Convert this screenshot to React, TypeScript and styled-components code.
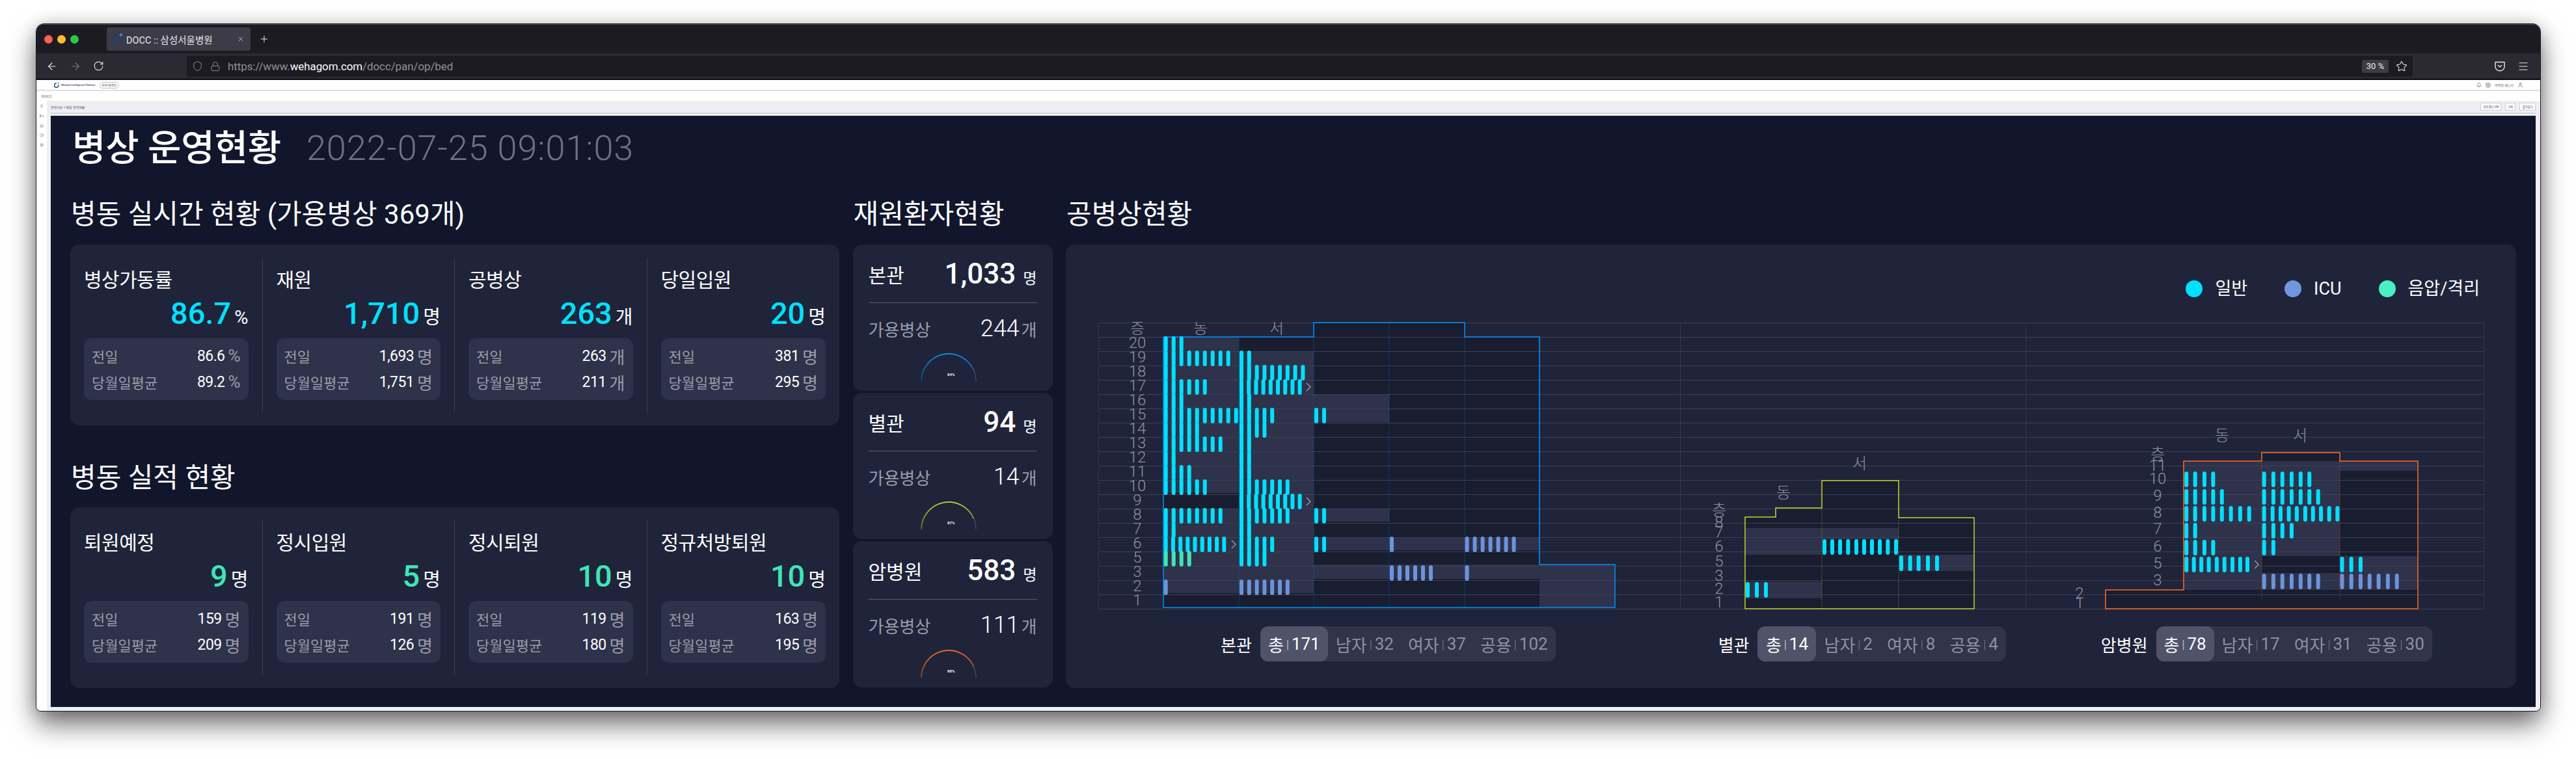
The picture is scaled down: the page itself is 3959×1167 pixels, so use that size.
import React from 'react';
import styled, { createGlobalStyle } from 'styled-components';
import { ArrowLeft, ArrowRight, RotateCw, Shield, Lock, Star, Menu, Plus, X, Bell, Grid2x2, Home, Bed, Settings, Clock, User } from 'lucide-react';

const FONT = `Roboto, "Noto Sans CJK KR", "Noto Sans", sans-serif`;

const Global = createGlobalStyle`
  html, body { margin: 0; padding: 0; background: #fff; overflow: hidden; }
  body { font-family: ${FONT}; }
  * { box-sizing: border-box; }
`;

const Page = styled.div`
  width: 3959px; height: 1167px; padding: 37px 0 0 56px; background: #fff; overflow: hidden;
`;
const Browser = styled.div`
  width: 3848px; height: 1056px; display: flex; flex-direction: column; overflow: hidden;
  border-radius: 12px 12px 7px 7px; background: #fff;
  box-shadow: 0 0 0 1px #1a1a1e, 0 20px 42px rgba(0,0,0,.58), 0 0 26px rgba(0,0,0,.16);
`;
const TabBar = styled.div`
  height: 45px; flex: none; background: #1c1b22; display: flex; align-items: center; padding-left: 12px;
  border-top: 1px solid #55545c;
`;
const Light = styled.span<{ $c: string }>`
  width: 13px; height: 13px; border-radius: 50%; background: ${p => p.$c}; margin-right: 7px;
`;
const Tab = styled.div`
  width: 221px; height: 36px; margin-left: 36px; background: #3d3b47; border-radius: 4px; color: #e8e8ec;
  display: flex; align-items: center; padding: 0 9px 0 9px; font-size: 14.5px; gap: 4px; white-space: nowrap;
`;
const TabTitle = styled.span` flex: 1; `;
const NewTab = styled.span` margin-left: 13px; color: #e8e8ec; display: flex; `;
const Toolbar = styled.div`
  height: 41px; flex: none; background: #2b2a33; border-bottom: 2px solid #0a0a0c; display: flex; align-items: center;
  padding: 0 17px 0 15px; color: #e8e8ec;
`;
const NavIcons = styled.div` width: 216px; display: flex; gap: 18px; align-items: center; flex: none; `;
const UrlBar = styled.div`
  width: 3421px; height: 32px; background: #1c1b22; border-radius: 4px; display: flex; align-items: center;
  padding: 0 8px; gap: 11px; font-size: 17px; color: #8f8f9a; flex: none;
`;
const UrlStrong = styled.b` color: #fbfbfe; font-weight: 400; `;
const UrlText = styled.span` flex: 1; letter-spacing: -.1px; `;
const Zoom = styled.span`
  width: 41px; height: 20px; background: #3d3b47; border-radius: 3px; color: #eee; font-size: 13px;
  display: flex; align-items: center; justify-content: center;
`;
const ToolEnd = styled.div` margin-left: auto; display: flex; gap: 18px; align-items: center; `;

const AppHeader = styled.div`
  height: 17px; flex: none; background: #fff; border-bottom: 2px solid #dfdfe3; display: flex; align-items: center;
  padding: 0 26px 0 27px; font-size: 5px; color: #555;
`;
const LogoText = styled.span` margin-left: 2px; color: #2b3a6b; font-weight: 500; font-size: 4px; `;
const HospitalTag = styled.span`
  margin-left: 6px; border: 1px solid #bbb; border-radius: 5px; padding: 1px 3px; font-size: 4px; color: #334;
`;
const HeaderEnd = styled.div` margin-left: auto; display: flex; align-items: center; gap: 6px; color: #666; `;
const AppTitle = styled.div`
  height: 15px; flex: none; background: #fff; font-size: 6px; color: #555; padding-left: 8px; display: flex; align-items: center;
`;
const AppBody = styled.div` flex: 1; display: flex; min-height: 0; `;
const Sidebar = styled.div`
  width: 16px; flex: none; background: #fff; display: flex; flex-direction: column; align-items: center; gap: 9px;
  padding: 5px 0 0 0; color: #777;
`;
const Content = styled.div`
  flex: 1; background: #eeeff5; padding: 0 7px 6px 6px; display: flex; flex-direction: column; min-width: 0;
`;
const Crumb = styled.div`
  height: 20px; flex: none; border-bottom: 2px solid #d4d6df; display: flex; align-items: center; font-size: 5px; color: #444;
  padding-left: 0; margin-bottom: 3px;
`;
const CrumbButtons = styled.div` margin-left: auto; display: flex; gap: 6px; `;
const CrumbButton = styled.span`
  background: #fff; border: 1px solid #ccd; font-size: 4.5px; padding: 2px 3px; color: #445;
`;
const Panel = styled.div`
  flex: 1; background: #11162c; padding: 0 30px; color: #fff; min-height: 0;
`;
const Head = styled.div` height: 86px; display: flex; align-items: center; gap: 39px; padding: 13px 0 0 3px; `;
const Title = styled.h1` margin: 0; font-size: 56px; font-weight: 500; line-height: 60px; letter-spacing: -.3px; white-space: nowrap; `;
const DateText = styled.span` font-size: 54px; font-weight: 300; color: #6e7185; line-height: 60px; letter-spacing: .9px; `;
const Columns = styled.div` display: grid; grid-template-columns: 1182px 307px 2229px; column-gap: 20.5px; `;
const SectionTitle = styled.h2<{ $top: number; $h: number }>`
  margin: 0; height: ${p => p.$h}px; padding: ${p => p.$top}px 0 0 1px; font-size: 42px; line-height: 42px; font-weight: 400; white-space: nowrap;
`;
const Card = styled.div`
  background: #1f243a; border-radius: 14px;
`;
const StatCard = styled(Card)`
  height: 278px; padding: 21px 0 20px; display: grid; grid-template-columns: repeat(4, 1fr);
`;
const StatCol = styled.div`
  padding: 0 21px; border-right: 1px solid #3a3e54;
  &:last-child { border-right: 0; }
`;
const StatLabel = styled.div` height: 68px; line-height: 68px; font-size: 30px; white-space: nowrap; letter-spacing: -.5px; `;
const StatValueRow = styled.div` height: 34px; display: flex; justify-content: flex-end; align-items: baseline; gap: 5px; line-height: 34px; `;
const StatValue = styled.span<{ $c: string }>` font-size: 47px; color: ${p => p.$c}; font-weight: 500; `;
const StatUnit = styled.span` font-size: 29px; color: #fff; `;
const SubBox = styled.div`
  margin-top: 21px; height: 95px; padding: 7px 12px; border-radius: 12px; background: #2e324a;
`;
const SubRow = styled.div`
  height: 40px; display: flex; align-items: center; justify-content: space-between; font-size: 22px; color: #9a9cab;
`;
const SubRight = styled.span` display: flex; align-items: center; gap: 5px; `;
const SubNum = styled.span` color: #fff; font-size: 23px; letter-spacing: -.6px; `;
const SubUnit = styled.span` font-size: 26px; color: #9a9cab; `;

const WardStack = styled.div` display: grid; grid-auto-rows: 225px; row-gap: 3px; `;
const WardCard = styled(Card)` padding: 0 24px; `;
const WardTop = styled.div`
  height: 90px; border-bottom: 1px solid #5b5e72; display: flex; align-items: center; justify-content: space-between;
`;
const WardName = styled.span` font-size: 30px; `;
const WardNum = styled.span` font-size: 44px; font-weight: 500; `;
const WardUnit = styled.span` font-size: 23px; margin-left: 11px; `;
const WardMid = styled.div`
  height: 78px; display: flex; align-items: center; justify-content: space-between; color: #9a9cab; font-size: 26px;
`;
const WardBeds = styled.span` color: #fff; font-size: 36px; font-weight: 300; `;
const WardBedUnit = styled.span` color: #9a9cab; font-size: 26px; margin-left: 3px; `;
const GaugeWrap = styled.div` display: flex; justify-content: center; padding-right: 12px; margin-top: -2px; `;
const GaugeNote = styled.text` font-size: 6px; font-weight: 700; fill: #fff; `;

const VacancyCard = styled(Card)` height: 682px; display: flex; flex-direction: column; `;
const Legend = styled.div`
  margin-top: 55px; height: 26px; display: flex; justify-content: flex-end; padding-right: 56px; gap: 57px; flex: none;
`;
const LegendItem = styled.div` display: flex; align-items: center; gap: 19px; font-size: 27px; line-height: 26px; `;
const LegendDot = styled.span<{ $c: string }>` width: 26px; height: 26px; border-radius: 50%; background: ${p => p.$c}; `;
const ChartSvg = styled.svg`
  display: block; margin: 38px 0 0 49px; flex: none; font-family: ${FONT};
`;
const ChartLabel = styled.text`
  font-size: 24px; font-weight: 300; fill: #8f92a3; text-anchor: middle; dominant-baseline: central;
`;
const Summary = styled.div` margin-top: 25px; display: flex; align-items: center; `;
const SummaryGroup = styled.div<{ $left: number }>`
  margin-left: ${p => p.$left}px; display: flex; align-items: center; gap: 13px; flex: none;
`;
const SummaryName = styled.span` font-size: 26px; color: #fff; `;
const Pill = styled.div`
  height: 54px; border-radius: 12px; background: #31344b; display: flex; align-items: center; gap: 22px;
  color: #8f91a2; font-size: 26px; padding-right: 12px;
`;
const PillItem = styled.span<{ $on?: boolean; $w?: number }>`
  height: 54px; display: flex; align-items: center; justify-content: center; gap: 4px; white-space: nowrap;
  ${p => p.$on ? `background:#50536a;color:#fff;border-radius:12px;margin-right:-10px;` : ''}
  ${p => p.$w ? `width:${p.$w}px;` : ''}
`;
const PillSep = styled.span` font-size: 18px; font-weight: 300; opacity: .8; `;

/* ---------- data ---------- */
const CYAN = '#00e1ff', ICU = '#6c93dc', GREEN = '#3fe6b6';

type Stat = { label: string; value: string; unit: string; prev: string; avg: string };
const live: Stat[] = [
  { label: '병상가동률', value: '86.7', unit: '%', prev: '86.6', avg: '89.2' },
  { label: '재원', value: '1,710', unit: '명', prev: '1,693', avg: '1,751' },
  { label: '공병상', value: '263', unit: '개', prev: '263', avg: '211' },
  { label: '당일입원', value: '20', unit: '명', prev: '381', avg: '295' },
];
const done: Stat[] = [
  { label: '퇴원예정', value: '9', unit: '명', prev: '159', avg: '209' },
  { label: '정시입원', value: '5', unit: '명', prev: '191', avg: '126' },
  { label: '정시퇴원', value: '10', unit: '명', prev: '119', avg: '180' },
  { label: '정규처방퇴원', value: '10', unit: '명', prev: '163', avg: '195' },
];
const wards = [
  { name: '본관', n: '1,033', beds: '244', pct: .87, c: '#0a8fef', dark: '#0b3f73', note: '84%' },
  { name: '별관', n: '94', beds: '14', pct: .87, c: '#c6d42a', dark: '#5f6a20', note: '87%' },
  { name: '암병원', n: '583', beds: '111', pct: .87, c: '#ff6a26', dark: '#86401f', note: '88%' },
];

const seq = (s: number, p: number, n: number) => Array.from({ length: n }, (_, i) => s + p * i);
const floors1 = [20,19,18,17,16,15,14,13,12,11,10,9,8,7,6,5,3,2,1];
const y1 = (f: number) => 518 + 22 * floors1.indexOf(f);

type Bars = { xs: number[]; y: number; h: number; c: string; w?: number };
type Rect = [number, number, number, number];
type Building = {
  color: string; path: string; lit: Rect[]; div: [number, number, number][]; bars: Bars[];
  labels: [string, number, number][]; arrows: [number, number][];
};

const A = 1791.7, B = 1908, C = 2023, D = 2139, E = 2254.6;
const r1 = (f: number, x: number, p: number, n: number, c = CYAN): Bars => ({ xs: seq(x, p, n), y: y1(f) - 1, h: 24, c });
const b1: Building = {
  color: '#0091ff',
  path: 'M1788 934 V518 H2019 V496 H2251 V518 H2366 V868 H2482 V934 Z',
  lit: [
    [1788, 518, 116, 240], [1788, 782, 116, 130], [1904, 540, 115, 372],
    [2019, 606, 116, 43], [2019, 782, 116, 20], [2019, 826, 347, 20], [2019, 868, 347, 22], [2366, 868, 116, 66],
  ],
  div: [[1904, 518, 934], [2019, 518, 934], [2135, 496, 934], [2251, 518, 934], [2366, 518, 868]],
  bars: [
    ...([[20,3],[19,9],[18,2],[17,6],[16,3],[15,10],[14,5],[13,8],[12,2],[11,4],[10,6],[8,8],[7,2]] as [number,number][]).map(([f,n]) => r1(f, A, 12, n)),
    r1(6, A, 11.2, 9), r1(5, A, 12, 4, GREEN), r1(2, A, 12, 1, ICU),
    ...([[19,2],[18,9],[16,2],[15,5],[14,4],[13,2],[12,2],[11,2],[10,7],[8,7],[7,2],[6,5],[5,4]] as [number,number][]).map(([f,n]) => r1(f, B, 11.8, n)),
    r1(17, B, 11.2, 9), r1(9, B, 11.2, 9), r1(2, B, 11.8, 7, ICU),
    r1(15, C, 12, 2), r1(8, C, 12, 2), r1(6, C, 12, 2),
    r1(6, D, 12, 1, ICU), r1(3, D, 12, 6, ICU), r1(6, E, 12, 7, ICU), r1(3, E, 12, 1, ICU),
  ],
  labels: [['층', 1748, 505], ...floors1.map(f => [String(f), 1748, y1(f) + 9] as [string, number, number]), ['동', 1845, 505], ['서', 1962, 505]],
  arrows: [[2011, y1(17) + 11], [2011, y1(9) + 11], [1896, y1(6) + 11]],
};

const b2: Building = {
  color: '#c6d42a',
  path: 'M2682 936 V795 H2729 V781 H2800 V739 H2918 V796 H3034 V936 Z',
  lit: [[2682, 812, 118, 41], [2800, 812, 118, 17], [2918, 853, 116, 25], [2682, 894, 118, 26]],
  div: [[2800, 781, 936], [2918, 796, 936]],
  bars: [
    { xs: [2686, 2700, 2714], y: 895, h: 24, c: CYAN },
    { xs: [732, 768, 804, 841, 879, 915, 951, 987, 1024, 1062].map(v => 2560 + v / 3), y: 829, h: 24, c: CYAN },
    { xs: [1086, 1127, 1166, 1209, 1251].map(v => 2560 + v / 3), y: 854, h: 24, c: CYAN },
  ],
  labels: [
    ['층', 2642, 785], ['8', 2642, 803], ['7', 2642, 818], ['6', 2642, 840], ['5', 2642, 863], ['3', 2642, 885], ['2', 2642, 905], ['1', 2642, 926],
    ['동', 2741, 758], ['서', 2858, 713],
  ],
  arrows: [],
};

const z = (v: number) => 3140 + v / 2.529;
const row3 = (y: number, vals: number[], c = CYAN): Bars => ({ xs: vals.map(z), y, h: 24, c });
const b3: Building = {
  color: '#ff6a26',
  path: 'M3236 936 V907 H3356 V709 H3476 V696 H3596 V709 H3716 V936 Z',
  lit: [[3356, 709, 120, 198], [3476, 709, 120, 146], [3476, 881, 120, 26], [3596, 709, 120, 15], [3596, 855, 120, 52]],
  div: [[3476, 709, 921], [3596, 709, 921]],
  bars: [
    row3(725, [557, 591, 627, 661]), row3(752, [557, 591, 627, 661, 695]), row3(778, [557, 591, 627, 661, 695, 730, 766, 801]),
    row3(804, [557, 591]), row3(830, [557, 591, 627, 661]), row3(856, [557, 586, 615, 644, 675, 705, 736, 766, 794]),
    row3(725, [859, 895, 930, 966, 1001, 1035]), row3(752, [859, 895, 930, 966, 1001, 1035, 1069]),
    row3(778, [859, 892, 923, 955, 986, 1019, 1049, 1080, 1112, 1144]), row3(804, [859, 895, 930, 966]), row3(830, [859, 895]),
    row3(882, [859, 895, 930, 966, 1001, 1035, 1069], ICU),
    row3(856, [1162, 1198, 1234]), row3(882, [1162, 1198, 1234, 1269, 1304, 1340, 1375], ICU),
  ],
  labels: [
    ['층', 3316, 699], ['11', 3316, 716], ['10', 3316, 736], ['9', 3316, 762], ['8', 3316, 788], ['7', 3316, 813], ['6', 3316, 840], ['5', 3316, 866], ['3', 3316, 892],
    ['2', 3196, 912], ['1', 3196, 927], ['동', 3415, 670], ['서', 3535, 670],
  ],
  arrows: [[z(830), 868]],
};

const gridRows = Array.from({ length: 21 }, (_, i) => 496 + 22 * i);

const StatGrid = ({ items, color }: { items: Stat[]; color: string }) => (
  <StatCard>
    {items.map(s => (
      <StatCol key={s.label}>
        <StatLabel>{s.label}</StatLabel>
        <StatValueRow><StatValue $c={color}>{s.value}</StatValue><StatUnit>{s.unit}</StatUnit></StatValueRow>
        <SubBox>
          <SubRow>전일<SubRight><SubNum>{s.prev}</SubNum><SubUnit>{s.unit}</SubUnit></SubRight></SubRow>
          <SubRow>당월일평균<SubRight><SubNum>{s.avg}</SubNum><SubUnit>{s.unit}</SubUnit></SubRight></SubRow>
        </SubBox>
      </StatCol>
    ))}
  </StatCard>
);

const Gauge = ({ pct, c, dark, note, id }: { pct: number; c: string; dark: string; note: string; id: string }) => {
  const R = 42, cx = 44, cy = 44;
  const a = Math.PI * (1 - pct);
  const ex = cx + R * Math.cos(a), ey = cy - R * Math.sin(a);
  return (
    <svg width="88" height="45" viewBox="0 0 88 45">
      <defs>
        <linearGradient id={id} x1="0" y1="1" x2="0" y2="0">
          <stop offset="0" stopColor={dark} />
          <stop offset="1" stopColor={c} />
        </linearGradient>
      </defs>
      <path d={`M${cx - R} ${cy} A${R} ${R} 0 0 1 ${cx + R} ${cy}`} fill="none" stroke="#44475b" strokeWidth="1.5" />
      <path d={`M${cx - R} ${cy} A${R} ${R} 0 0 1 ${ex} ${ey}`} fill="none" stroke={`url(#${id})`} strokeWidth="1.7" />
      <GaugeNote x="42" y="36">{note}</GaugeNote>
    </svg>
  );
};

const BuildingShape = ({ b }: { b: Building }) => (
  <path d={b.path} fill="#181d2f" />
);
const BuildingLit = ({ b }: { b: Building }) => (
  <>{b.lit.map((r, i) => <rect key={i} x={r[0]} y={r[1]} width={r[2]} height={r[3]} fill="#2e324a" />)}</>
);
const BuildingTop = ({ b }: { b: Building }) => (
  <>
    {b.div.map((d, i) => <line key={i} x1={d[0]} x2={d[0]} y1={d[1]} y2={d[2]} stroke={b.color} strokeWidth="1" strokeDasharray="1.5 2" opacity=".6" />)}
    <path d={b.path} fill="none" stroke={b.color} strokeWidth="1.5" />
    {b.bars.flatMap((g, i) => g.xs.map((x, j) => (
      <rect key={`${i}-${j}`} x={x - 3} y={g.y} width={g.w ?? 6} height={g.h} rx="3" fill={g.c} />
    )))}
    {b.arrows.map((a, i) => <polyline key={i} points={`${a[0] - 3},${a[1] - 6} ${a[0] + 3},${a[1]} ${a[0] - 3},${a[1] + 6}`} fill="none" stroke="#a3a5b3" strokeWidth="1.2" />)}
    {b.labels.map((l, i) => <ChartLabel key={i} x={l[1]} y={l[2]}>{l[0]}</ChartLabel>)}
  </>
);

const Summ = ({ name, left, w, items }: { name: string; left: number; w: number; items: [string, string][] }) => (
  <SummaryGroup $left={left}>
    <SummaryName>{name}</SummaryName>
    <Pill>
      {items.map(([k, v], i) => (
        <PillItem key={k} $on={i === 0} $w={i === 0 ? w : undefined}>{k}<PillSep>|</PillSep>{v}</PillItem>
      ))}
    </Pill>
  </SummaryGroup>
);

const Favicon = ({ w = 17, h = 20 }: { w?: number; h?: number }) => (
  <svg width={w} height={h} viewBox="0 0 17 20">
    <path d="M7 4a6.5 6.5 0 1 0 6 5" fill="none" stroke="#1d3f78" strokeWidth="3" />
    <path d="M13 0l1 2.6 2.6 1-2.6 1-1 2.6-1-2.6-2.6-1 2.6-1z" fill="#2f8fff" />
  </svg>
);
const PocketIcon = () => (
  <svg width="18" height="18" viewBox="0 0 18 18" fill="none" stroke="#e8e8ec" strokeWidth="1.4">
    <path d="M2 2.5h14v7a7 6.5 0 0 1-14 0z" strokeLinejoin="round" />
    <path d="M6 7l3 3 3-3" />
  </svg>
);

export default function App() {
  return (
    <Page>
      <Global />
      <Browser>
        <TabBar>
          <Light $c="#ff5f57" /><Light $c="#febc2e" /><Light $c="#28c840" />
          <Tab>
            <Favicon />
            <TabTitle>DOCC :: 삼성서울병원</TabTitle>
            <X size={12} strokeWidth={1.3} />
          </Tab>
          <NewTab><Plus size={16} strokeWidth={1.5} /></NewTab>
        </TabBar>
        <Toolbar>
          <NavIcons>
            <ArrowLeft size={18} strokeWidth={1.5} />
            <ArrowRight size={18} strokeWidth={1.5} color="#77767f" />
            <RotateCw size={17} strokeWidth={1.5} />
          </NavIcons>
          <UrlBar>
            <Shield size={17} strokeWidth={1.4} />
            <Lock size={16} strokeWidth={1.4} />
            <UrlText>https://www.<UrlStrong>wehagom.com</UrlStrong>/docc/pan/op/bed</UrlText>
            <Zoom>30 %</Zoom>
            <Star size={18} strokeWidth={1.4} color="#e8e8ec" />
          </UrlBar>
          <ToolEnd><PocketIcon /><Menu size={18} strokeWidth={1.5} /></ToolEnd>
        </Toolbar>
        <AppHeader>
          <Favicon w={9} h={10} />
          <LogoText>Medical Intelligence Platform</LogoText>
          <HospitalTag>삼성서울병원</HospitalTag>
          <HeaderEnd><Bell size={8} /><Grid2x2 size={8} /><span>박병원 매니저</span><User size={9} /></HeaderEnd>
        </AppHeader>
        <AppTitle>DOCC</AppTitle>
        <AppBody>
          <Sidebar>
            <User size={6} /><Bed size={6} /><Home size={6} /><Clock size={6} /><Settings size={6} />
          </Sidebar>
          <Content>
            <Crumb>
              운영지표 &gt; 병상 운영현황
              <CrumbButtons><CrumbButton>자동갱신 ON</CrumbButton><CrumbButton>기록</CrumbButton><CrumbButton>즐겨찾기</CrumbButton></CrumbButtons>
            </Crumb>
            <Panel>
              <Head>
                <Title>병상 운영현황</Title>
                <DateText>2022-07-25 09:01:03</DateText>
              </Head>
              <Columns>
                <div>
                  <SectionTitle $top={45} $h={112}>병동 실시간 현황 (가용병상 369개)</SectionTitle>
                  <StatGrid items={live} color={CYAN} />
                  <SectionTitle $top={60} $h={126}>병동 실적 현황</SectionTitle>
                  <StatGrid items={done} color={GREEN} />
                </div>
                <div>
                  <SectionTitle $top={45} $h={112}>재원환자현황</SectionTitle>
                  <WardStack>
                    {wards.map((w, i) => (
                      <WardCard key={w.name}>
                        <WardTop>
                          <WardName>{w.name}</WardName>
                          <span><WardNum>{w.n}</WardNum><WardUnit>명</WardUnit></span>
                        </WardTop>
                        <WardMid>
                          가용병상
                          <span><WardBeds>{w.beds}</WardBeds><WardBedUnit>개</WardBedUnit></span>
                        </WardMid>
                        <GaugeWrap>
                          <Gauge pct={w.pct} c={w.c} dark={w.dark} note={w.note} id={`gauge-${i}`} />
                        </GaugeWrap>
                      </WardCard>
                    ))}
                  </WardStack>
                </div>
                <div>
                  <SectionTitle $top={45} $h={112}>공병상현황</SectionTitle>
                  <VacancyCard>
                    <Legend>
                      <LegendItem><LegendDot $c={CYAN} />일반</LegendItem>
                      <LegendItem><LegendDot $c="#7097dd" />ICU</LegendItem>
                      <LegendItem><LegendDot $c="#48f0c2" />음압/격리</LegendItem>
                    </Legend>
                    <ChartSvg width="2131" height="443" viewBox="1687 495 2131 443">
                      {[b1, b2, b3].map((b, i) => <BuildingShape key={i} b={b} />)}
                      {[b1, b2, b3].map((b, i) => <BuildingLit key={i} b={b} />)}
                      {gridRows.map(y => <line key={y} x1="1688" x2="3817" y1={y + .5} y2={y + .5} stroke="#3c4057" strokeWidth="1" />)}
                      {[1688, 2582, 3113, 3817].map(x => <line key={x} x1={x + .5} x2={x + .5} y1="496" y2="936" stroke="#33374d" strokeWidth="1" />)}
                      {[b1, b2, b3].map((b, i) => <BuildingTop key={i} b={b} />)}
                    </ChartSvg>
                    <Summary>
                      <Summ name="본관" left={238} w={104} items={[['총', '171'], ['남자', '32'], ['여자', '37'], ['공용', '102']]} />
                      <Summ name="별관" left={250} w={90} items={[['총', '14'], ['남자', '2'], ['여자', '8'], ['공용', '4']]} />
                      <Summ name="암병원" left={146} w={89} items={[['총', '78'], ['남자', '17'], ['여자', '31'], ['공용', '30']]} />
                    </Summary>
                  </VacancyCard>
                </div>
              </Columns>
            </Panel>
          </Content>
        </AppBody>
      </Browser>
    </Page>
  );
}
